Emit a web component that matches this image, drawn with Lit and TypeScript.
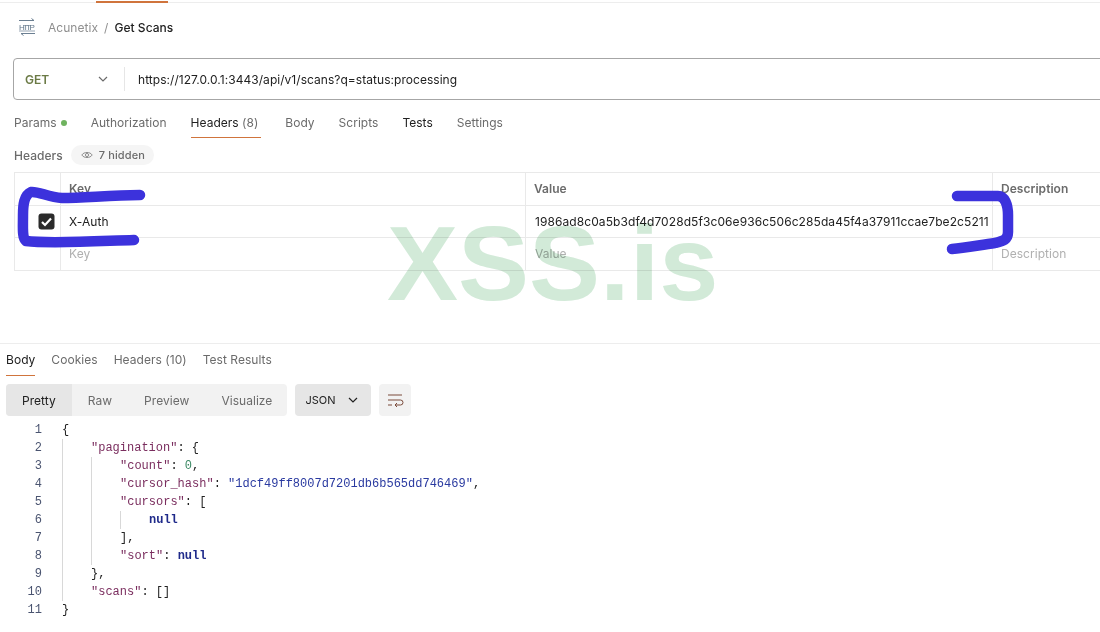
import { LitElement, html, css, svg } from "lit";
import { customElement } from "lit/decorators.js";

const chevron = svg`<path d="M3 5 L7 9 L11 5" fill="none" stroke="currentColor" stroke-width="1.2"/>`;

@customElement("app-root")
export class AppRoot extends LitElement {
  static styles = css`
    :host { display: block; width: 1100px; height: 632px; position: relative; overflow: hidden; background: #fff; font-family: Inter, "Liberation Sans", sans-serif; font-size: 12px; letter-spacing: .04px; color: #212121; }
    .topbar { height: 3px; box-sizing: border-box; border-bottom: 1px solid #ededed; display: flex; padding: 1px 0 0 96px; }
    .topbar i { display: block; width: 72px; height: 2px; background: #d0743c; }
    .crumbs { display: flex; align-items: center; height: 48px; padding-left: 18px; gap: 12px; }
    .http { width: 18px; height: 18px; display: block; }
    .crumbs .parent { color: #8f8f8f; }
    .crumbs .cur { font-weight: 500; color: #212121; }
    .crumbs .txt { display: flex; gap: 6px; }
    .urlbar { margin: 7px -20px 0 13px; height: 42px; box-sizing: border-box; border: 1px solid #a6a6a6; border-radius: 4px; display: flex; align-items: center; }
    .method { width: 110px; box-sizing: border-box; padding: 0 14px 0 11px; display: flex; align-items: center; justify-content: space-between; font-weight: 600; color: #6b7a45; }
    .method svg { width: 14px; height: 14px; color: #6b6b6b; }
    .urlsep { width: 1px; height: 24px; background: #e6e6e6; }
    .url { padding-left: 13px; color: #212121; }
    .tabs { display: flex; align-items: flex-start; }
    .reqtabs { margin-top: 11px; padding-left: 14px; gap: 24px; height: 28px; box-sizing: border-box; letter-spacing: .02px; }
    .tab { color: #6b6b6b; height: 27px; line-height: 24px; box-sizing: border-box; }
    .tab.active { color: #212121; border-bottom: 1px solid #d0743c; }
    .tab.dark { color: #212121; }
    .tab small { font-size: inherit; color: #6b6b6b; }
    .reqtabs .tab.active { padding-right: 3px; }
    .dot { display: inline-block; width: 6px; height: 6px; border-radius: 50%; background: #6fb35f; margin-left: 4px; vertical-align: 1px; }
    .hdrrow { display: flex; align-items: center; height: 22px; margin-top: 5px; padding-left: 14px; gap: 8px; color: #6b6b6b; font-weight: 500; }
    .pill { display: flex; align-items: center; gap: 6px; height: 20px; padding: 0 9px 0 10px; border-radius: 10px; background: #f5f5f5; font-size: 11px; letter-spacing: .12px; }
    .pill svg { width: 12px; height: 12px; color: #8f8f8f; }
    .table { margin: 6px -30px 0 14px; display: grid; grid-template-columns: 46px 465px 467px 1fr; border-top: 1px solid #e9e9e9; border-left: 1px solid #e9e9e9; }
    .cell { height: 33px; box-sizing: border-box; border-right: 1px solid #e9e9e9; border-bottom: 1px solid #e9e9e9; display: flex; align-items: center; padding-left: 8px; white-space: nowrap; overflow: hidden; }
    .cell.r { height: 32px; }
    .cell.h { color: #6b6b6b; font-weight: 600; padding-bottom: 2px; }
    .cell.ph { color: #b0b0b0; padding-bottom: 2px; }
    .cell.cb { justify-content: flex-end; padding: 0 5px 0 0; }
    .cell.val { letter-spacing: .08px; padding-left: 9px; }
    .cell.ph.valp { padding-left: 9px; }
    .check { width: 17px; height: 17px; display: block; }
    .resp { margin-top: 72px; border-top: 1px solid #ededed; }
    .resptabs { padding-left: 6px; gap: 16px; height: 32px; }
    .resptabs .tab { height: 32px; line-height: 31px; }
    .tools { display: flex; padding-left: 6px; margin-top: 8px; gap: 8px; height: 32px; }
    .seg { display: flex; background: #f2f2f2; border-radius: 4px; overflow: hidden; color: #6b6b6b; }
    .seg span { display: flex; align-items: center; padding: 0 16px; }
    .seg span.on { background: #e6e6e6; color: #212121; padding: 0 16px; }
    .seg span.last { padding: 0 15px 0 16px; }
    .lang { width: 76px; box-sizing: border-box; background: #e6e6e6; border-radius: 4px; display: flex; align-items: center; justify-content: space-between; padding: 0 11px 0 10px; font-size: 11px; }
    .lang svg { width: 14px; height: 14px; }
    .wrap { width: 32px; background: #f2f2f2; border-radius: 4px; display: flex; align-items: center; justify-content: center; }
    .wrap svg { width: 18px; height: 18px; }
    .code { margin-top: 5px; font-family: "Liberation Mono", monospace; font-size: 12px; line-height: 18px; letter-spacing: 0; }
    .line { display: flex; height: 18px; white-space: pre; }
    .n { width: 42px; text-align: right; color: #4a5470; flex: none; }
    .src { padding-left: 20px; color: #212121; display: flex; }
    .g { width: 29px; flex: none; align-self: stretch; box-sizing: border-box; border-left: 1px solid #d8d8d8; }
    .k { color: #7a2d5e; }
    .s { color: #2a3aa0; }
    .v { color: #1f2a8a; font-weight: 700; }
    .num { color: #3d8a66; }
    .mark { position: absolute; left: 0; top: 0; width: 1100px; height: 632px; pointer-events: none; }
    .wm { position: absolute; left: 387px; top: 203px; font-family: "Liberation Sans", sans-serif; font-weight: 700; font-size: 106.5px; line-height: 122px; letter-spacing: 0; color: #d2ead8; mix-blend-mode: multiply; pointer-events: none; }
  `;

  private line(n: number, guides: number, content: unknown) {
    return html`<div class="line"><span class="n">${n}</span><span class="src">${Array.from({ length: guides }, () => html`<span class="g"></span>`)}<span>${content}</span></span></div>`;
  }

  render() {
    return html`
      <div class="topbar"><i></i></div>
      <div class="crumbs">
        <svg class="http" viewBox="0 0 18 18" fill="none" stroke="#6b7f92" stroke-width="1">
          <path d="M1 2.5 H16 L13.5 .5"/><path d="M17 15.5 H3 L5.5 17.5"/>
          <path d="M1 13 H17" stroke-width=".7"/>
          <text x="9" y="11.5" text-anchor="middle" textLength="16" font-family="Liberation Sans" font-size="8" fill="#5f7488" stroke="none">HTTP</text>
        </svg>
        <div class="txt"><span class="parent">Acunetix</span><span class="parent">/</span><span class="cur">Get Scans</span></div>
      </div>
      <div class="urlbar">
        <div class="method"><span>GET</span><svg viewBox="0 0 14 14">${chevron}</svg></div>
        <div class="urlsep"></div>
        <div class="url">https://127.0.0.1:3443/api/v1/scans?q=status:processing</div>
      </div>
      <div class="tabs reqtabs">
        <div class="tab">Params<span class="dot"></span></div>
        <div class="tab">Authorization</div>
        <div class="tab active">Headers <small>(8)</small></div>
        <div class="tab">Body</div>
        <div class="tab">Scripts</div>
        <div class="tab dark">Tests</div>
        <div class="tab">Settings</div>
      </div>
      <div class="hdrrow">
        <span>Headers</span>
        <span class="pill"><svg viewBox="0 0 12 12" fill="none" stroke="currentColor"><path d="M.8 6 C3 2.6 9 2.6 11.2 6 C9 9.4 3 9.4 .8 6 Z"/><circle cx="6" cy="6" r="1.6"/></svg>7 hidden</span>
      </div>
      <div class="table">
        <div class="cell"></div><div class="cell h">Key</div><div class="cell h">Value</div><div class="cell h">Description</div>
        <div class="cell r cb"><svg class="check" viewBox="0 0 17 17"><rect x=".5" y=".5" width="16" height="16" rx="3" fill="#2b2b2b"/><path d="M4 9 L7 12 L13 5.5" fill="none" stroke="#fff" stroke-width="2.2"/></svg></div>
        <div class="cell r">X-Auth</div>
        <div class="cell r val">1986ad8c0a5b3df4d7028d5f3c06e936c506c285da45f4a37911ccae7be2c5211</div>
        <div class="cell r"></div>
        <div class="cell"></div><div class="cell ph">Key</div><div class="cell ph valp">Value</div><div class="cell ph">Description</div>
      </div>
      <div class="resp">
        <div class="tabs resptabs">
          <div class="tab active">Body</div>
          <div class="tab">Cookies</div>
          <div class="tab">Headers <small>(10)</small></div>
          <div class="tab">Test Results</div>
        </div>
        <div class="tools">
          <div class="seg"><span class="on">Pretty</span><span>Raw</span><span>Preview</span><span class="last">Visualize</span></div>
          <div class="lang"><span>JSON</span><svg viewBox="0 0 14 14">${chevron}</svg></div>
          <div class="wrap"><svg viewBox="0 0 18 18" fill="none" stroke="#7a4a3a" stroke-width="1"><path d="M2 4 H16"/><path d="M2 9 H14.5 A2.5 2.5 0 0 1 14.5 14 H9"/><path d="M11 12 L9 14 L11 16"/><path d="M2 14 H6"/></svg></div>
        </div>
        <div class="code">
          ${this.line(1, 0, html`{`)}
          ${this.line(2, 1, html`<span class="k">"pagination"</span>: {`)}
          ${this.line(3, 2, html`<span class="k">"count"</span>: <span class="num">0</span>,`)}
          ${this.line(4, 2, html`<span class="k">"cursor_hash"</span>: <span class="s">"1dcf49ff8007d7201db6b565dd746469"</span>,`)}
          ${this.line(5, 2, html`<span class="k">"cursors"</span>: [`)}
          ${this.line(6, 3, html`<span class="v">null</span>`)}
          ${this.line(7, 2, html`],`)}
          ${this.line(8, 2, html`<span class="k">"sort"</span>: <span class="v">null</span>`)}
          ${this.line(9, 1, html`},`)}
          ${this.line(10, 1, html`<span class="k">"scans"</span>: []`)}
          ${this.line(11, 0, html`}`)}
        </div>
      </div>
      <div class="wm">XSS.is</div>
      <svg class="mark" viewBox="0 0 1100 632" fill="none" stroke="#3c32dc" stroke-width="10.5" stroke-linecap="round" stroke-linejoin="round">
        <path d="M140 195 C110 195 85 198 62 198 C48 197 38 191 31 192 C24 195 23 205 23 215 C23 228 22 238 26 241 C50 244 100 241 134 240"/>
        <path d="M957 196 L998 196 C1005 196 1008 205 1008 215 L1008 232 C1008 240 1003 241 995 243 C980 245 965 248 952 249"/>
      </svg>
    `;
  }
}
